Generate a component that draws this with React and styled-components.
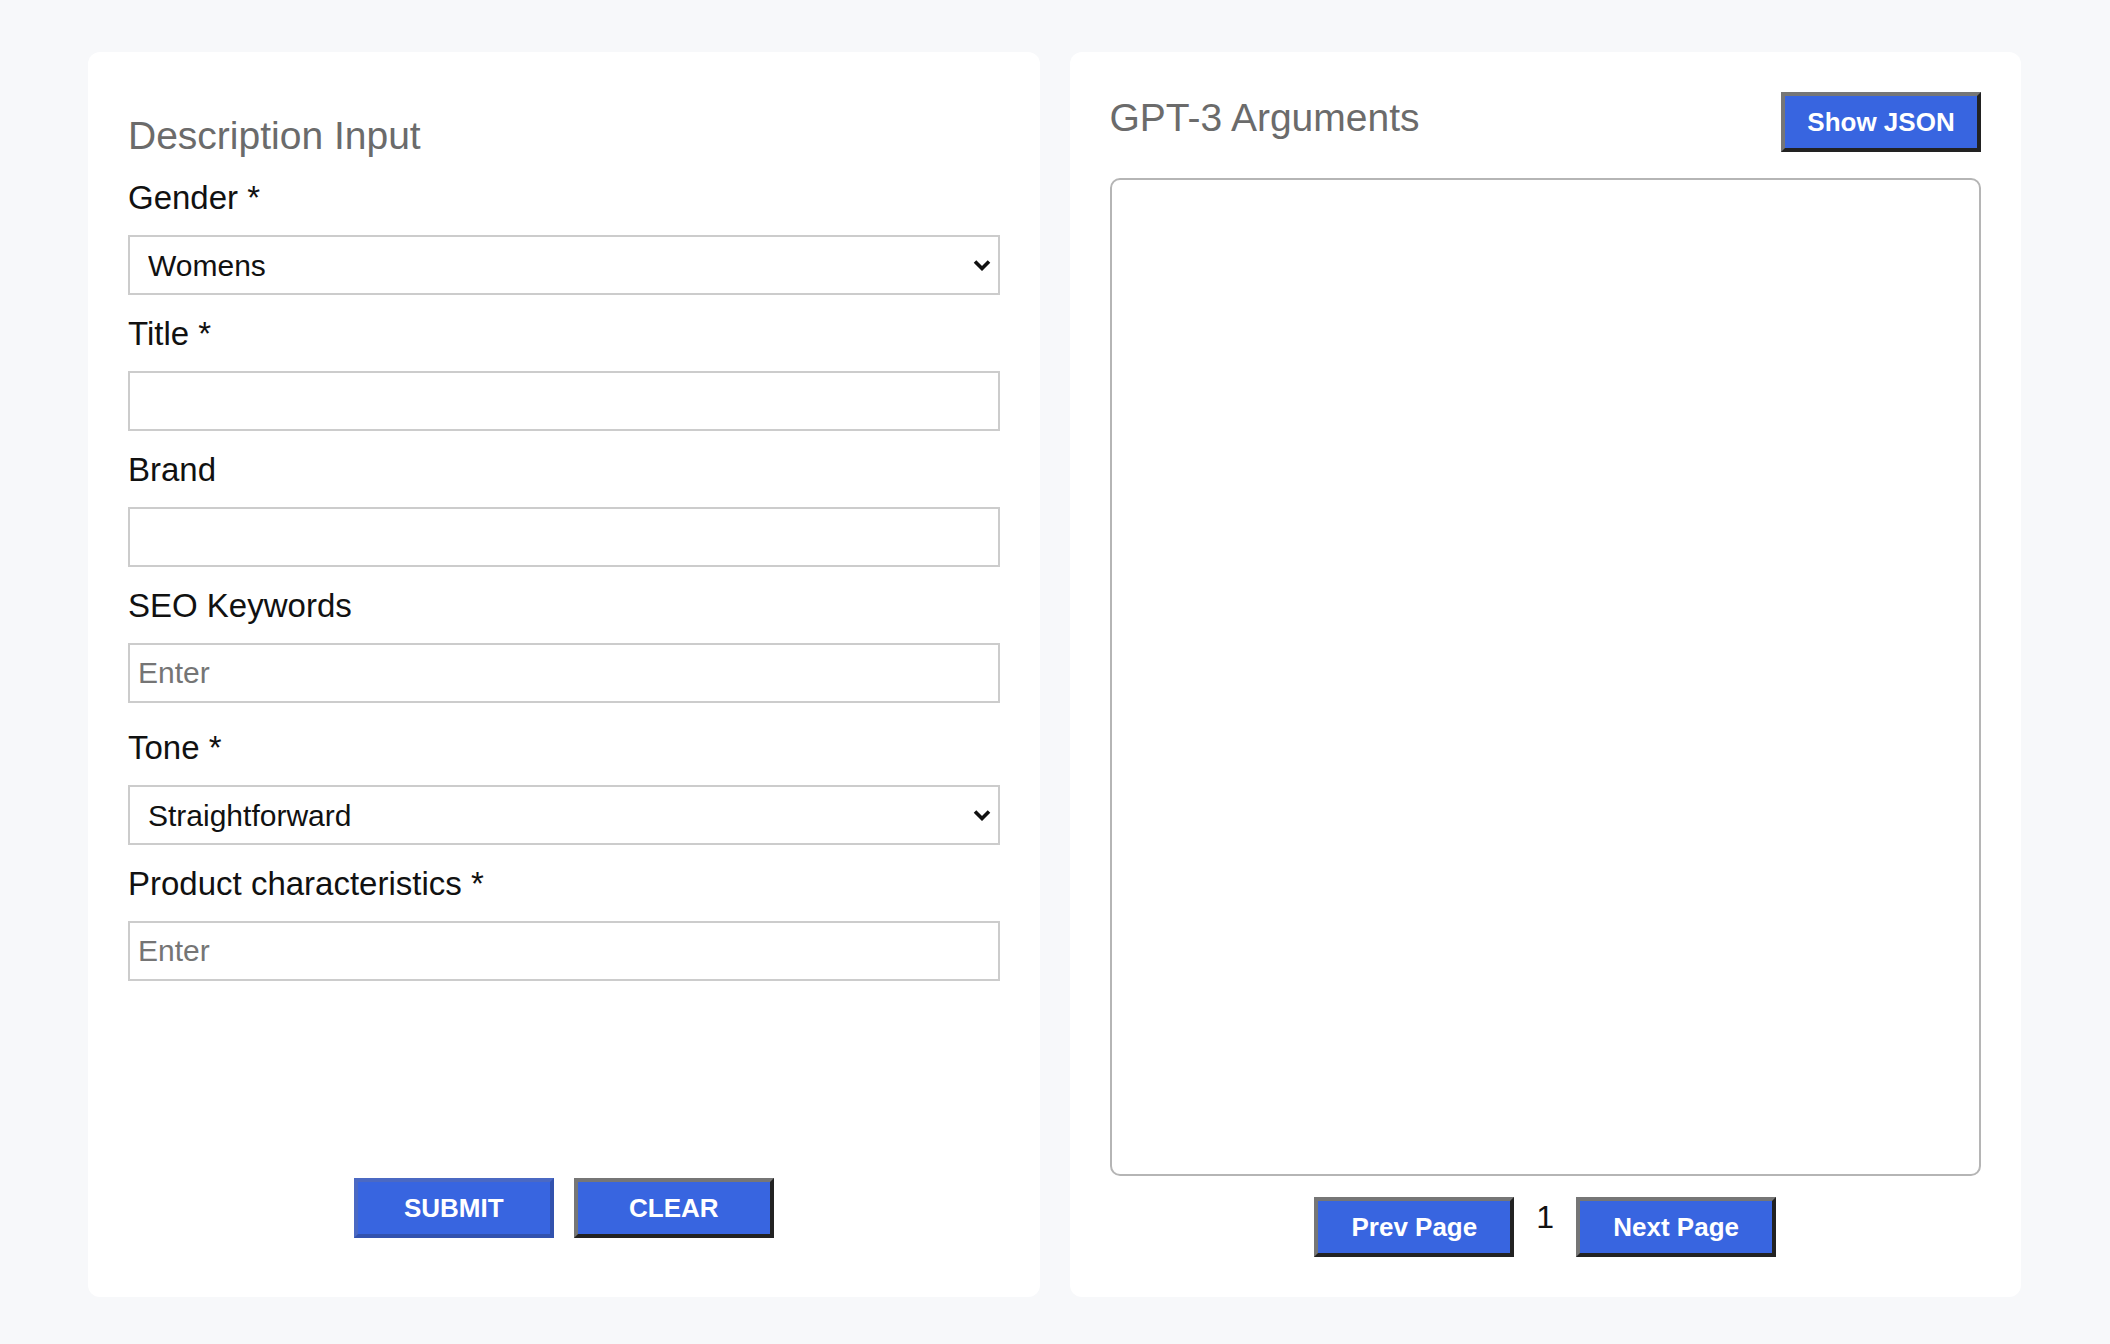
import React from 'react';
import styled, { createGlobalStyle } from 'styled-components';

const GlobalStyle = createGlobalStyle`
  * { box-sizing: border-box; }
  body {
    margin: 0;
    background: #f7f8fa;
    font-family: "Liberation Sans", Arial, Helvetica, sans-serif;
    color: #111;
  }
`;

const Page = styled.div`
  display: flex;
  gap: 30px;
  height: 1344px;
  padding: 52px 89px 47px 88px;
`;

const Card = styled.div`
  flex: 1;
  display: flex;
  flex-direction: column;
  background: #fff;
  border-radius: 12px;
  padding: ${p => p.$form ? '62px 40px 59px' : '40px'};
`;

const Heading = styled.h2`
  margin: 0;
  font-size: 39px;
  line-height: 44px;
  font-weight: 400;
  color: #6b6b6b;
`;

const FormHeading = styled(Heading)`
  margin-bottom: 22px;
`;

const Field = styled.div`
  display: flex;
  flex-direction: column;
  margin-bottom: ${p => p.$extra ? '27px' : '21px'};
`;

const Label = styled.label`
  font-size: 33px;
  line-height: 36px;
  margin-bottom: 19px;
  color: #111;
`;

const TextInput = styled.input`
  width: 100%;
  height: 60px;
  border: 2px solid #cccccc;
  border-radius: 0;
  padding: 0 8px;
  font-family: inherit;
  font-size: 30px;
  color: #111;
  background: #fff;
  outline: none;
  &::placeholder { color: #757575; }
`;

const SelectWrap = styled.div`
  position: relative;
`;

const Select = styled.select`
  appearance: none;
  width: 100%;
  height: 60px;
  border: 2px solid #cccccc;
  border-radius: 0;
  padding: 0 40px 0 18px;
  font-family: inherit;
  font-size: 30px;
  color: #111;
  background: #fff;
  outline: none;
`;

const Chevron = styled.svg`
  position: absolute;
  right: 9px;
  top: 50%;
  width: 18px;
  height: 12px;
  margin-top: -6px;
  pointer-events: none;
`;

const ButtonRow = styled.div`
  margin-top: auto;
  display: flex;
  justify-content: center;
  gap: 20px;
`;

const Button = styled.button`
  width: 200px;
  height: 60px;
  padding: 0;
  background: #3865e0;
  color: #fff;
  font-family: "Liberation Sans", Arial, sans-serif;
  font-size: 26px;
  font-weight: 700;
  text-transform: ${p => p.$upper ? 'uppercase' : 'none'};
  border: 4px solid;
  border-color: ${p => p.$active
    ? '#4b69c3 #3252ae #3252ae #4b69c3'
    : '#767676 #222 #222 #767676'};
  cursor: pointer;
`;

const Header = styled.div`
  display: flex;
  justify-content: space-between;
  align-items: flex-start;
  margin-bottom: 26px;
`;

const HeaderTitle = styled(Heading)`
  padding-top: 4px;
`;

const Output = styled.div`
  flex: 1;
  border: 2px solid #b5b5b5;
  border-radius: 10px;
  margin-bottom: 21px;
`;

const Pager = styled.div`
  display: flex;
  justify-content: center;
  align-items: flex-start;
`;

const PageNum = styled.span`
  font-size: 32px;
  line-height: 36px;
  margin: 2px 22px 0;
  color: #111;
`;

const Arrow = () => (
  <Chevron viewBox="0 0 18 12">
    <polyline points="2,2.5 9,9.5 16,2.5" fill="none" stroke="#111" strokeWidth="3.6" />
  </Chevron>
);

const App = () => {
  return (
    <>
      <GlobalStyle />
      <Page>
        <Card $form>
          <FormHeading>Description Input</FormHeading>
          <Field>
            <Label>Gender *</Label>
            <SelectWrap>
              <Select defaultValue="Womens">
                <option>Womens</option>
                <option>Mens</option>
                <option>Unisex</option>
              </Select>
              <Arrow />
            </SelectWrap>
          </Field>
          <Field>
            <Label>Title *</Label>
            <TextInput type="text" />
          </Field>
          <Field>
            <Label>Brand</Label>
            <TextInput type="text" />
          </Field>
          <Field $extra>
            <Label>SEO Keywords</Label>
            <TextInput type="text" placeholder="Enter" />
          </Field>
          <Field>
            <Label>Tone *</Label>
            <SelectWrap>
              <Select defaultValue="Straightforward">
                <option>Straightforward</option>
                <option>Playful</option>
                <option>Luxurious</option>
              </Select>
              <Arrow />
            </SelectWrap>
          </Field>
          <Field>
            <Label>Product characteristics *</Label>
            <TextInput type="text" placeholder="Enter" />
          </Field>
          <ButtonRow>
            <Button $upper $active>Submit</Button>
            <Button $upper>Clear</Button>
          </ButtonRow>
        </Card>

        <Card>
          <Header>
            <HeaderTitle>GPT-3 Arguments</HeaderTitle>
            <Button>Show JSON</Button>
          </Header>
          <Output />
          <Pager>
            <Button>Prev Page</Button>
            <PageNum>1</PageNum>
            <Button>Next Page</Button>
          </Pager>
        </Card>
      </Page>
    </>
  );
};

export default App;
